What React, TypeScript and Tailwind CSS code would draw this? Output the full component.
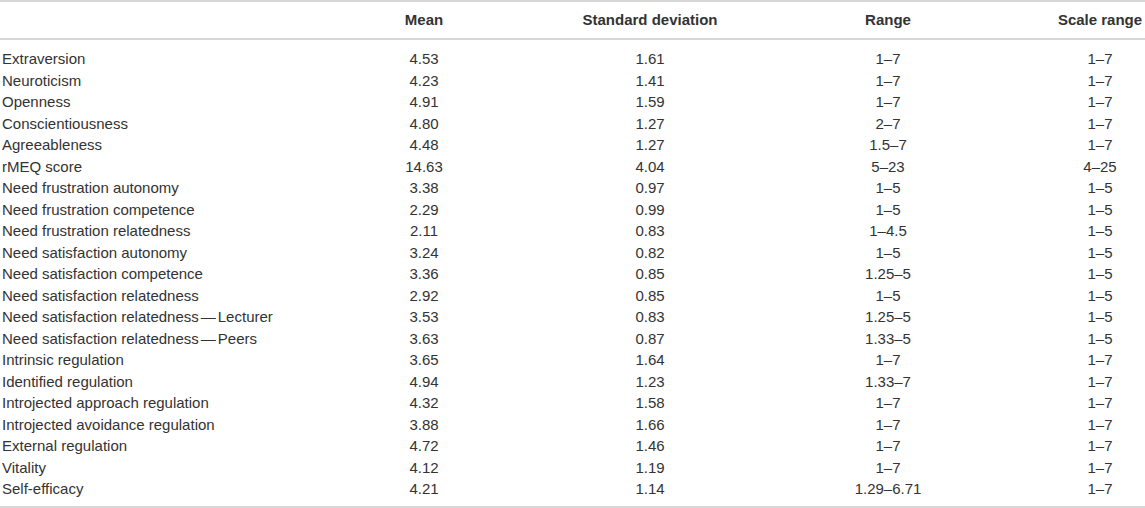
import React from "react";

const rows: [string, string, string, string, string][] = [
  ["Extraversion", "4.53", "1.61", "1–7", "1–7"],
  ["Neuroticism", "4.23", "1.41", "1–7", "1–7"],
  ["Openness", "4.91", "1.59", "1–7", "1–7"],
  ["Conscientiousness", "4.80", "1.27", "2–7", "1–7"],
  ["Agreeableness", "4.48", "1.27", "1.5–7", "1–7"],
  ["rMEQ score", "14.63", "4.04", "5–23", "4–25"],
  ["Need frustration autonomy", "3.38", "0.97", "1–5", "1–5"],
  ["Need frustration competence", "2.29", "0.99", "1–5", "1–5"],
  ["Need frustration relatedness", "2.11", "0.83", "1–4.5", "1–5"],
  ["Need satisfaction autonomy", "3.24", "0.82", "1–5", "1–5"],
  ["Need satisfaction competence", "3.36", "0.85", "1.25–5", "1–5"],
  ["Need satisfaction relatedness", "2.92", "0.85", "1–5", "1–5"],
  ["Need satisfaction relatedness—Lecturer", "3.53", "0.83", "1.25–5", "1–5"],
  ["Need satisfaction relatedness—Peers", "3.63", "0.87", "1.33–5", "1–5"],
  ["Intrinsic regulation", "3.65", "1.64", "1–7", "1–7"],
  ["Identified regulation", "4.94", "1.23", "1.33–7", "1–7"],
  ["Introjected approach regulation", "4.32", "1.58", "1–7", "1–7"],
  ["Introjected avoidance regulation", "3.88", "1.66", "1–7", "1–7"],
  ["External regulation", "4.72", "1.46", "1–7", "1–7"],
  ["Vitality", "4.12", "1.19", "1–7", "1–7"],
  ["Self-efficacy", "4.21", "1.14", "1.29–6.71", "1–7"],
];

function Label({ text }: { text: string }) {
  const parts = text.split("—");
  if (parts.length === 1) return <>{text}</>;
  return (
    <>
      {parts[0]}
      <span className="mx-[2px]">—</span>
      {parts[1]}
    </>
  );
}

export default function App() {
  return (
    <div
      className="w-[1145px] h-[508px] bg-white text-[#333333] text-[15px]"
      style={{ fontFamily: '"Liberation Sans", Arial, Helvetica, sans-serif' }}
    >
      <div className="border-t-2 border-[#d6d6d6]">
        <div className="grid grid-cols-[364px_120px_332px_144px_1fr] h-[38px] items-center font-bold border-b-2 border-[#d6d6d6]">
          <div></div>
          <div className="text-center">Mean</div>
          <div className="text-center">Standard deviation</div>
          <div className="text-center">Range</div>
          <div className="text-center pl-[95px]">Scale range</div>
        </div>
        <div className="pt-[8px] pb-[6px] border-b-2 border-[#d6d6d6]">
          {rows.map((r) => (
            <div
              key={r[0]}
              className="grid grid-cols-[364px_120px_332px_144px_1fr] h-[21.5px] items-center leading-none"
            >
              <div className="pl-[2px] whitespace-nowrap">
                <Label text={r[0]} />
              </div>
              <div className="text-center">{r[1]}</div>
              <div className="text-center">{r[2]}</div>
              <div className="text-center">{r[3]}</div>
              <div className="text-center pl-[95px]">{r[4]}</div>
            </div>
          ))}
        </div>
      </div>
    </div>
  );
}
